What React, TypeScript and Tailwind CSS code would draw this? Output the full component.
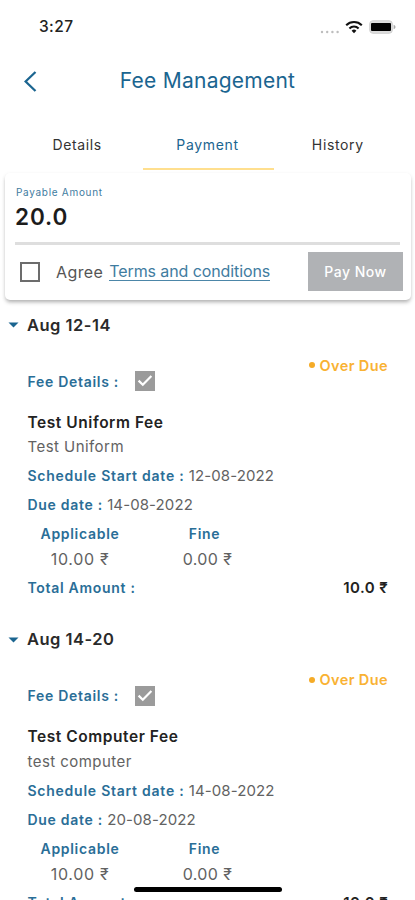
import clsx from "clsx";

const tabs = ["Details", "Payment", "History"];

const fees = [
	{
		period: "Aug 12-14",
		name: "Test Uniform Fee",
		description: "Test Uniform",
		start: "12-08-2022",
		due: "14-08-2022",
	},
	{
		period: "Aug 14-20",
		name: "Test Computer Fee",
		description: "test computer",
		start: "14-08-2022",
		due: "20-08-2022",
	},
];

function StatusBar() {
	return (
		<div className="flex h-[54px] shrink-0 items-center justify-between pl-[39px] pr-[19px]">
			<span className="text-[15.5px] font-medium tracking-[0.4px] text-[#222]">3:27</span>
			<div className="flex items-center">
				<svg width="20" height="4" viewBox="0 0 20 4" fill="#bdbdbd" className="mt-[9px] mr-[5px]">
					<circle cx="2" cy="2" r="1.2" />
					<circle cx="7.2" cy="2" r="1.2" />
					<circle cx="12.4" cy="2" r="1.2" />
					<circle cx="17.6" cy="2" r="1.2" />
				</svg>
				<svg width="18" height="14" viewBox="0 0 18 14" fill="none" stroke="#111" strokeWidth="2.1" className="mr-[6px] mt-[-1px]">
					<path d="M1.2 5.2a11.2 11.2 0 0 1 15.6 0" />
					<path d="M4.4 8.4a6.6 6.6 0 0 1 9.2 0" />
					<path d="M9 13.2 6.6 10.7a3.4 3.4 0 0 1 4.8 0z" fill="#111" stroke="none" />
				</svg>
				<svg width="27" height="14" viewBox="0 0 27 14">
					<rect x="0.7" y="0.7" width="22.6" height="12.6" rx="3.2" fill="#dcdcdc" stroke="#d0d0d0" />
					<rect x="2" y="3" width="20" height="8" rx="1" fill="#000" />
					<path d="M24.6 4.8c1.4.5 1.9 1.3 1.9 2.2s-.5 1.7-1.9 2.2z" fill="#aaa" />
				</svg>
			</div>
		</div>
	);
}

function Header() {
	return (
		<header className="grid h-[54px] shrink-0 grid-cols-[60px_1fr_60px] items-center">
			<button type="button" aria-label="Back" className="pl-6">
				<svg width="13" height="21" viewBox="0 0 13 21" fill="none" stroke="#1b6590" strokeWidth="2.3">
					<path d="M11.5 1 1.6 10.5 11.5 20" />
				</svg>
			</button>
			<h1 className="text-center text-[21px] tracking-[0.25px] text-[#1b6590]">Fee Management</h1>
		</header>
	);
}

function Tabs() {
	return (
		<nav className="grid h-[62px] shrink-0 grid-cols-3 pl-[13px] pr-[11px] pt-3">
			{tabs.map((tab) => (
				<button
					key={tab}
					type="button"
					className={clsx(
						"border-b-2 pr-[2px] text-[14px] tracking-[0.65px]",
						tab === "Payment" ? "border-[#ffdf8e] text-[#1b6590]" : "border-transparent text-[#333]",
					)}
				>
					{tab}
				</button>
			))}
		</nav>
	);
}

function PaymentCard() {
	return (
		<section className="ml-[5px] mr-[4px] mt-[3px] h-[127px] shrink-0 rounded-[5px] bg-white pt-3 shadow-[0_3px_4px_-1px_rgba(0,0,0,0.3),0_1px_4px_rgba(0,0,0,0.06)]">
			<p className="pl-[11px] text-[10px] leading-[14px] tracking-[0.7px] text-[#3f7c9f]">Payable Amount</p>
			<p className="pl-[10px] pt-[4px] text-[22.5px] leading-[28px] font-semibold tracking-[0.9px] text-[#1c1c1c]">20.0</p>
			<div className="ml-[10px] mr-[11px] mt-[11px] h-[3px] bg-[#dedede]" />
			<div className="flex items-center pl-[15px] pr-[8px] pt-[7px]">
				<span className="size-5 border-2 border-[#6c6c6c]" />
				<span className="ml-4 text-[16px] tracking-[0.4px] text-[#555]">Agree</span>
				<a className="ml-[6px] whitespace-nowrap border-b border-[#4c86a8] text-[16px] leading-[17px] tracking-[-0.1px] text-[#3f7c9f]">
					Terms and conditions
				</a>
				<button type="button" className="ml-auto h-[39px] w-[95px] bg-[#b0b2b5] text-[14px] font-medium tracking-[0.5px] text-white">
					Pay Now
				</button>
			</div>
		</section>
	);
}

function FeeItem({ fee }: { fee: (typeof fees)[number] }) {
	return (
		<article className="h-[314.5px] shrink-0 text-[15px] leading-[29px] text-[#626262]">
			<h2 className="flex h-[30px] items-center pl-[8px] text-[16.5px] font-semibold tracking-[0.5px] text-[#2a2a2a]">
				<svg width="11" height="6" viewBox="0 0 11 6" fill="#1b6590" className="mr-[8px]">
					<path d="M0.5 0.5h10L5.5 5.5z" />
				</svg>
				{fee.period}
			</h2>
			<div className="pl-[27.5px] pr-[27px]">
				<p className="mt-[15px] flex h-5 items-center justify-end gap-[5px] text-[14.5px] font-semibold tracking-[0.4px] text-[#f9b233]">
					<span className="size-[6px] rounded-full bg-[#f5ab27]" />
					Over Due
				</p>
				<div className="mt-[-4px] flex h-5 items-center">
					<span className="w-[107.5px] text-[14px] font-semibold tracking-[0.7px] text-[#2a6e97]">Fee Details :</span>
					<svg width="20" height="20" viewBox="0 0 20 20">
						<rect width="20" height="20" fill="#9b9b9b" />
						<path d="m3.6 9.6 4.2 4.2 8.6-8.8" fill="none" stroke="#fff" strokeWidth="2.2" />
					</svg>
				</div>
				<h3 className="mt-[18.5px] h-[25.5px] leading-[26px] text-[15.5px] font-semibold tracking-[0.55px] text-[#222]">{fee.name}</h3>
				<p className="h-[24px] leading-[24px] tracking-[0.45px]">{fee.description}</p>
				<p className="mt-[2px] h-[29px] whitespace-nowrap tracking-[0.1px]">
					<span className="text-[14px] font-semibold tracking-[0.75px] text-[#2a6e97]">Schedule Start date :</span> {fee.start}
				</p>
				<p className="h-[29px] whitespace-nowrap tracking-[0.1px]">
					<span className="text-[14px] font-semibold tracking-[0.7px] text-[#2a6e97]">Due date :</span> {fee.due}
				</p>
				<div className="grid grid-cols-[105px_144px] text-center">
					<span className="text-[14px] font-semibold tracking-[0.7px] text-[#2a6e97]">Applicable</span>
					<span className="text-[14px] font-semibold tracking-[0.7px] text-[#2a6e97]">Fine</span>
					<span className="text-[16px] leading-[22px] tracking-[0.7px]">10.00 ₹</span>
					<span className="pl-[6px] text-[16px] leading-[22px] tracking-[0.4px]">0.00 ₹</span>
				</div>
				<div className="mt-[3px] flex justify-between">
					<span className="text-[14px] font-semibold tracking-[0.7px] text-[#2a6e97]">Total Amount :</span>
					<span className="font-semibold tracking-[0.4px] text-[#222]">10.0 ₹</span>
				</div>
			</div>
		</article>
	);
}

export default function App() {
	return (
		<main className="relative flex h-[900px] w-[415px] flex-col overflow-hidden bg-white font-['Inter','Noto_Sans',sans-serif]">
			<StatusBar />
			<Header />
			<Tabs />
			<PaymentCard />
			<div className="flex flex-col pt-[10px]">
				{fees.map((fee) => (
					<FeeItem key={fee.period} fee={fee} />
				))}
			</div>
			<div className="absolute bottom-[8px] left-[134px] h-[5px] w-[148px] rounded-full bg-black" />
		</main>
	);
}
